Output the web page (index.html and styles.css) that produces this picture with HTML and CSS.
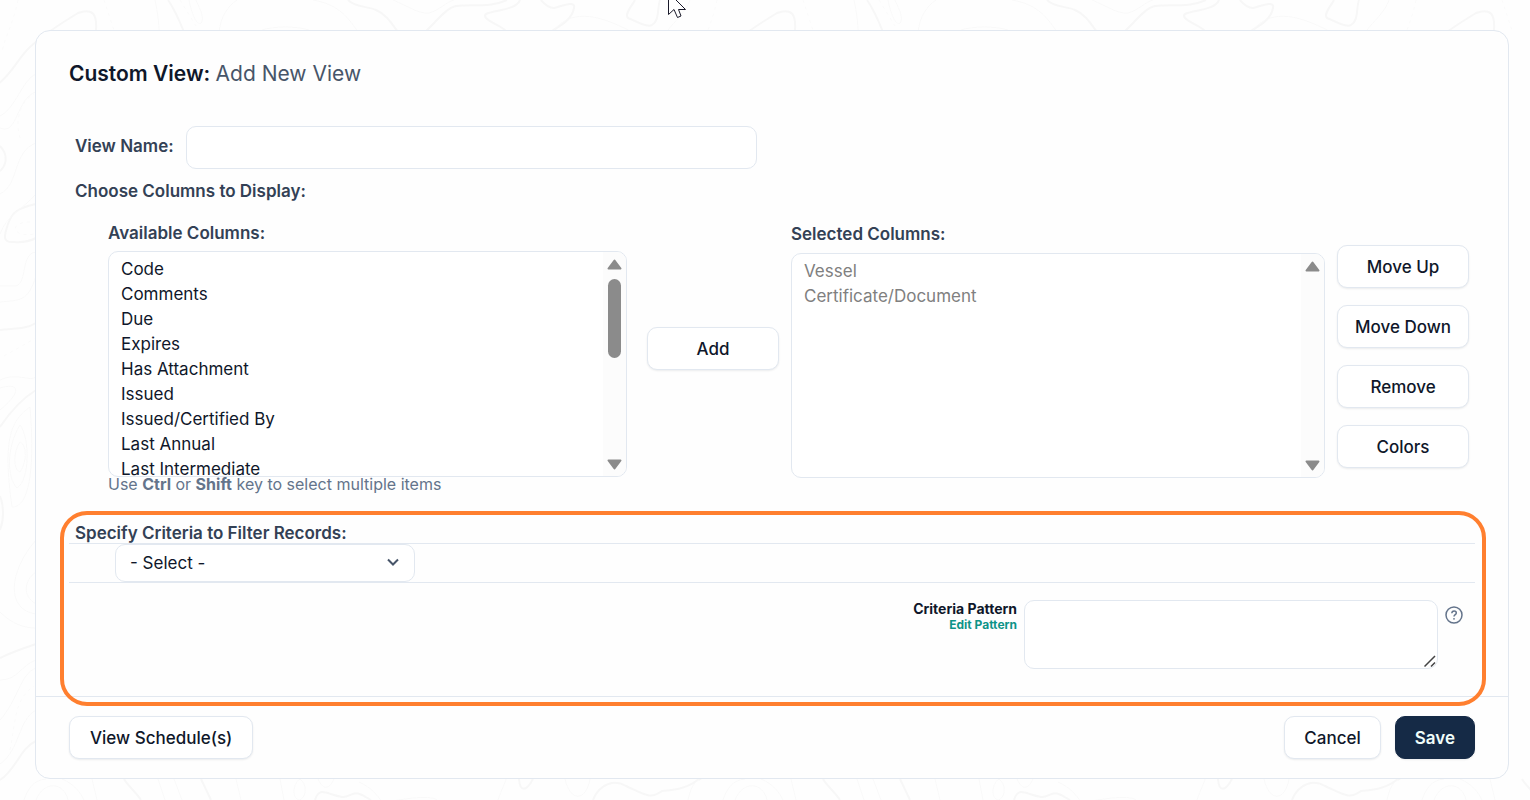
FILE: index.html
```html
<!DOCTYPE html>
<html lang="en">
<head>
<meta charset="utf-8">
<title>Custom View</title>
<link rel="stylesheet" href="styles.css">
</head>
<body>
<svg class="contours" aria-hidden="true">
  <defs>
    <pattern id="topo" width="699" height="800" patternUnits="userSpaceOnUse">
      <g fill="none" stroke="#f7f7f7">
        <g stroke-width="2">
          <path d="M-2 84C12 74 18 58 30 47 44 34 60 24 78 13 94 7 97 16 96 30"/>
          <path d="M168 0C175 10 180 22 184 32M348 0C356 8 368 6 376 10 386 14 392 24 398 32"/>
          <path d="M425 32C436 22 446 8 456 6 472 4 490 8 507 0M520 0C516 12 484 10 485 16 486 22 500 24 507 32"/>
          <path d="M541 0C546 6 550 8 554 8 562 6 576 0 574 8 572 20 560 26 550 32M635 0C632 6 624 14 628 18 638 22 648 28 652 25 660 20 657 8 660 0"/>
          <path d="M0 146C8 154 7 165 0 171M36 204C18 208 12 212 8 224 4 236 2 243 14 242 24 243 32 240 36 238"/>
          <path d="M0 330C12 328 25 330 36 323M36 390C20 400 8 415 0 427M0 496C4 506 4 520 0 530"/>
          <path d="M0 658C12 652 24 648 36 644M0 780C16 770 20 748 36 741M124 779C128 786 136 792 141 800M201 779L211 800"/>
          <path d="M315 800C319 786 326 794 342 797 350 798 352 790 362 795L371 800M519 779C520 792 526 792 533 779M593 800C600 782 616 780 626 786 644 794 650 800 662 791 676 790 688 788 699 779"/>
        </g>
        <g stroke-width="1" stroke="#f9f9f9">
          <path d="M155 0C158 14 159 24 159 32M219 32C221 16 228 6 237 0M313 0C336 4 346 14 358 32M262 30C274 26 296 26 309 30M189 0C192 16 198 28 202 22 204 14 198 6 196 0M393 0C408 6 418 14 429 13 440 10 446 2 454 0M552 32C570 10 594 12 632 32M690 0C686 12 674 22 668 30"/>
          <path d="M0 116C16 108 22 80 36 74M0 128C18 136 16 98 36 92M0 194C20 184 12 152 36 143M0 234C6 216 22 210 36 194M36 252C20 254 28 282 16 286H0M36 276C28 302 20 300 0 302"/>
          <path d="M0 380C16 372 30 382 36 377M0 388C20 382 22 392 0 410M30 407C12 420 2 436 12 507 26 508 36 480 30 407M20 425C6 448 7 478 17 488 30 480 30 438 20 425M20 442C13 452 13 470 20 472 28 460 26 444 20 442M36 540C8 572 6 610 36 614M36 572C24 580 22 596 36 604M0 612C12 624 24 628 36 628"/>
          <path d="M24 800C28 788 34 780 46 779M36 800C44 780 64 782 68 800M62 779C74 784 80 792 84 800M92 779L97 800M158 779L165 800M174 779L182 800M236 779L241 800M280 779L284 800M300 779C292 784 292 800 300 800 307 796 307 784 300 779M318 779C324 792 330 788 334 779M359 782C372 788 376 794 383 803 396 800 430 794 437 800M498 800C502 788 505 784 506 779M565 779C570 802 586 802 590 779M688 800C690 790 694 782 699 779"/>
          <path d="M0 680C18 680 20 666 36 660M0 720C18 700 20 674 36 668M0 764C20 750 18 720 36 710"/>
        </g>
        <path stroke="#fafafa" stroke-dasharray="3 4" d="M18 0C12 28 5 36 2 52M104 0L114 30M20 138C14 118 22 100 34 94M30 222C8 222 12 238 34 234M4 356L36 338M10 750C16 720 14 700 34 686M180 0L196 26"/>
      </g>
    </pattern>
  </defs>
  <rect width="100%" height="100%" fill="url(#topo)"/>
</svg>

<svg class="cursor" viewBox="0 0 20 18" aria-hidden="true">
  <path d="M.5-4V14.500L6 9.500L9.500 17.500L13 16L10.500 9.500H17.500L4-4Z" fill="#fff" stroke="#1a1a2a"/>
</svg>

<main class="card">
  <form class="form">
    <h1 class="title">Custom View: <span class="title-sub">Add New View</span></h1>

    <div class="name-row">
      <label class="label" for="view-name">View Name:</label>
      <input class="field name-input" id="view-name" type="text">
    </div>

    <h2 class="label section-label">Choose Columns to Display:</h2>

    <div class="columns">
      <div class="available">
        <label class="label" for="available">Available Columns:</label>
        <div class="list-wrap">
          <select class="field list" id="available" multiple>
            <option>Code</option>
            <option>Comments</option>
            <option>Due</option>
            <option>Expires</option>
            <option>Has Attachment</option>
            <option>Issued</option>
            <option>Issued/Certified By</option>
            <option>Last Annual</option>
            <option>Last Intermediate</option>
          </select>
          <div class="scrollbar" aria-hidden="true">
            <svg class="arrow" viewBox="0 0 15 11"><path d="M7.500 1.500L13.500 9.500H1.500Z"/></svg>
            <div class="thumb"></div>
            <svg class="arrow arrow-down" viewBox="0 0 15 11"><path d="M7.500 9.500L13.500 1.500H1.500Z"/></svg>
          </div>
        </div>
        <p class="hint">Use <b>Ctrl</b> or <b>Shift</b> key to select multiple items</p>
      </div>

      <button class="btn btn-add" type="button">Add</button>

      <div class="selected">
        <label class="label" for="selected">Selected Columns:</label>
        <div class="list-wrap">
          <select class="field list list-selected" id="selected" multiple>
            <option disabled>Vessel</option>
            <option disabled>Certificate/Document</option>
          </select>
          <div class="scrollbar" aria-hidden="true">
            <svg class="arrow" viewBox="0 0 15 11"><path d="M7.500 1.500L13.500 9.500H1.500Z"/></svg>
            <svg class="arrow arrow-down" viewBox="0 0 15 11"><path d="M7.500 9.500L13.500 1.500H1.500Z"/></svg>
          </div>
        </div>
      </div>

      <div class="order">
        <button class="btn" type="button">Move Up</button>
        <button class="btn" type="button">Move Down</button>
        <button class="btn" type="button">Remove</button>
        <button class="btn" type="button">Colors</button>
      </div>
    </div>

    <section class="criteria">
      <label class="label criteria-label" for="criterion">Specify Criteria to Filter Records:</label>
      <div class="criteria-row">
        <div class="select-wrap">
          <select class="field select" id="criterion">
            <option>- Select -</option>
          </select>
          <svg class="chevron" viewBox="0 0 14 14" aria-hidden="true"><path d="M2 4.500L7 9.500L12 4.500"/></svg>
        </div>
      </div>
      <div class="pattern">
        <div class="pattern-text">
          <label class="pattern-label" for="pattern">Criteria Pattern</label>
          <a class="pattern-link" href="#">Edit Pattern</a>
        </div>
        <div class="area-wrap">
          <textarea class="field area" id="pattern"></textarea>
          <svg class="grip" viewBox="0 0 12 12" aria-hidden="true"><path d="M.500 11.500L11 1M7 11.500L11 7.500"/></svg>
        </div>
        <button class="help" type="button" aria-label="Help">
          <svg viewBox="0 0 18 18" aria-hidden="true"><circle cx="9" cy="9" r="8"/><path d="M6.800 7.200C6.900 5.800 7.800 5 9.100 5C10.400 5 11.300 5.800 11.300 6.900C11.300 8.500 9 8.600 9 10.400"/><circle class="dot" cx="9" cy="12.800" r=".9"/></svg>
        </button>
      </div>
    </section>
  </form>

  <footer class="footer">
    <button class="btn" type="button">View Schedule(s)</button>
    <div class="footer-end">
      <button class="btn" type="button">Cancel</button>
      <button class="btn btn-save" type="button">Save</button>
    </div>
  </footer>
</main>
</body>
</html>
```
FILE: styles.css
```css
* {
  box-sizing: border-box;
}

body {
  margin: 0;
  padding: 30px 21px 21px 35px;
  background: #fefefe;
  color: #0f172a;
  font: 400 17px/24px Inter, sans-serif;
}

.contours {
  position: absolute;
  inset: 0;
  width: 100%;
  height: 100%;
}

.cursor {
  position: absolute;
  top: 0;
  left: 668px;
  width: 20px;
  height: 18px;
}

.card {
  position: relative;
  border: 1px solid #e2e8f0;
  border-radius: 15px;
  background: #fefefe;
}

.form {
  padding: 29px 33px 0;
}

.title {
  margin: 0;
  font-size: 21px;
  font-weight: 600;
  line-height: 28px;
}

.title-sub {
  color: #475569;
  font-weight: 400;
}

.label {
  margin: 0;
  color: #334155;
  font-size: 17px;
  font-weight: 600;
  line-height: 24px;
}

.field {
  margin: 0;
  border: 1px solid #e2e8f0;
  border-radius: 10px;
  outline: 0;
  background: #fff;
  color: #0f172a;
  font: inherit;
}

.name-row {
  display: flex;
  align-items: flex-start;
  gap: 12px;
  margin-top: 38px;
  padding-left: 6px;
}

.name-row .label {
  padding-top: 8px;
}

.name-input {
  flex: 0 1 571px;
  min-width: 0;
  height: 43px;
  padding: 0 12px;
}

.section-label {
  margin-top: 10px;
  padding-left: 6px;
}

.columns {
  display: grid;
  grid-template-columns: 527fr 132px 534fr 132px;
  column-gap: 12px;
  margin: 18px 6px 0 39px;
}

.available,
.selected,
.order {
  display: flex;
  flex-direction: column;
  min-width: 0;
}

.available {
  gap: 6px;
  padding-right: 8px;
}

.selected {
  gap: 7px;
  padding-top: 1px;
}

.list-wrap {
  position: relative;
}

.list {
  display: block;
  width: 100%;
  height: 226px;
  padding: 7px 12px;
  overflow: hidden;
}

.list-selected {
  height: 225px;
}

.list option {
  min-height: 25px;
  padding: 0;
  line-height: 25px;
}

.list option:disabled {
  color: #808080;
}

.scrollbar {
  position: absolute;
  inset: 1px 1px 1px auto;
  display: flex;
  flex-direction: column;
  align-items: center;
  gap: 9px;
  width: 23px;
  padding: 7px 0 6px;
  border-radius: 0 9px 9px 0;
  background: #fcfcfc;
}

.arrow {
  width: 15px;
  height: 11px;
  fill: #8b8b8b;
  stroke: #8b8b8b;
  stroke-width: 2;
  stroke-linejoin: round;
}

.arrow-down {
  margin-top: auto;
}

.thumb {
  width: 13px;
  height: 79px;
  border-radius: 7px;
  background: #8b8b8b;
}

.hint {
  position: relative;
  margin: -6px 0 0;
  color: #64748b;
  font-size: 16px;
  line-height: 14px;
}

.hint b {
  font-weight: 700;
}

.btn {
  height: 43px;
  padding: 0 20px;
  border: 1px solid #e2e8f0;
  border-radius: 10px;
  background: #fff;
  box-shadow: 0 1px 2px rgba(15, 23, 42, 0.08);
  color: #0f172a;
  font: 500 17px/24px Inter, sans-serif;
  white-space: nowrap;
}

.btn-add {
  margin-top: 106px;
}

.order {
  gap: 17px;
  padding-top: 24px;
}

.order .btn {
  padding: 0;
}

.criteria {
  position: relative;
  margin-top: 20px;
  padding: 12px 0 27px;
}

/* Highlight frame around the filter section */
.criteria::after {
  content: "";
  position: absolute;
  z-index: 1;
  inset: 0 -11px -10px -9px;
  border: 4px solid #ff7f2f;
  border-radius: 27px;
  pointer-events: none;
}

.criteria-label {
  display: block;
  padding-left: 6px;
  line-height: 20px;
}

.criteria-row {
  padding-left: 46px;
  border-top: 1px solid #e2e8f0;
  border-bottom: 1px solid #e2e8f0;
}

.select-wrap {
  position: relative;
  width: 300px;
}

.select {
  display: block;
  width: 100%;
  height: 38px;
  padding: 0 40px 0 14px;
  appearance: none;
}

.chevron {
  position: absolute;
  top: 11px;
  right: 15px;
  width: 14px;
  height: 14px;
  fill: none;
  stroke: #475569;
  stroke-width: 2;
  pointer-events: none;
}

.pattern {
  display: flex;
  justify-content: flex-end;
  align-items: flex-start;
  gap: 7px;
  padding: 17px 12px 0 0;
}

.pattern-text {
  display: flex;
  flex-direction: column;
  align-items: flex-end;
}

.pattern-label {
  font-size: 14px;
  font-weight: 700;
  line-height: 17px;
}

.pattern-link {
  color: #0d9488;
  font-size: 12px;
  font-weight: 700;
  line-height: 16px;
  text-decoration: none;
}

.area-wrap {
  position: relative;
  flex: 0 1 414px;
}

.area {
  display: block;
  width: 100%;
  height: 69px;
  padding: 8px 12px;
  resize: none;
}

.grip {
  position: absolute;
  right: 2px;
  bottom: 2px;
  width: 12px;
  height: 12px;
  fill: none;
  stroke: #444;
  stroke-width: 1.500;
}

.help {
  width: 18px;
  height: 18px;
  margin-top: 6px;
  padding: 0;
  border: 0;
  background: none;
}

.help svg {
  display: block;
  fill: none;
  stroke: #64748b;
  stroke-width: 1.500;
}

.help .dot {
  fill: #64748b;
  stroke: none;
}

.footer {
  display: flex;
  justify-content: space-between;
  padding: 19px 33px;
  border-top: 1px solid #e2e8f0;
}

.footer-end {
  display: flex;
  gap: 14px;
}

.footer-end .btn {
  padding: 0 19px;
}

.footer-end .btn-save {
  border-color: #152a46;
  background: #152a46;
  color: #f0fdfa;
  font-weight: 600;
}
```
